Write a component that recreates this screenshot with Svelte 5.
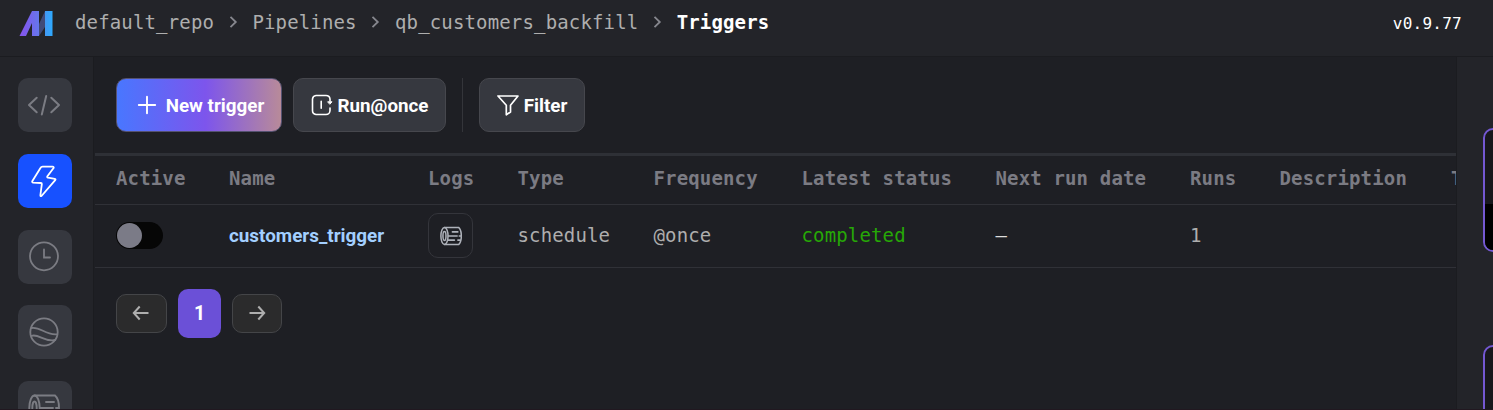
<script>
  const crumbs = ['default_repo', 'Pipelines', 'qb_customers_backfill', 'Triggers'];
  const columns = ['Active', 'Name', 'Logs', 'Type', 'Frequency', 'Latest status', 'Next run date', 'Runs', 'Description', 'T'];
  const nav = ['code', 'bolt', 'clock', 'planet', 'logs'];
</script>

{#snippet logs(size, stroke)}
  <svg width={size} height={size} viewBox="0 0 32 32" fill="none" stroke="currentColor" stroke-width={stroke} stroke-linecap="round">
    <ellipse cx="6.5" cy="16" rx="5.2" ry="12.5" />
    <ellipse cx="6.5" cy="16" rx="2.2" ry="6.5" />
    <path d="M6.5 3.5H27C30 6 31 11 31 16S30 26 27 28.5H6.5M12 16H25M18 10H26M28 16H31M12 22H21M26 22H29" />
  </svg>
{/snippet}

<div class="app">
  <header>
    <svg class="logo" width="34" height="26" viewBox="0 0 34 26">
      <defs>
        <linearGradient id="mark" x1="0" x2="1"><stop offset="0" stop-color="#8755e8" /><stop offset=".35" stop-color="#7b5dec" /><stop offset="1" stop-color="#6577ed" /></linearGradient>
        <linearGradient id="bar" x1="0" x2="1"><stop offset="0" stop-color="#4498f2" /><stop offset="1" stop-color="#2daaff" /></linearGradient>
      </defs>
      <path d="M20 14L26 1V17L20 26Z" fill="#414a78" />
      <path d="M0.5 26L13 1H20V26H13V13L7 26Z" fill="url(#mark)" />
      <path d="M26 1H33.5V26H26Z" fill="url(#bar)" />
    </svg>
    <nav class="crumbs">
      {#each crumbs as crumb, i}
        {#if i > 0}
          <svg width="9" height="14" viewBox="0 0 9 14" fill="none" stroke="#86878e" stroke-width="1.8"><path d="M1.5 1.8L6.8 7L1.5 12.2" /></svg>
        {/if}
        <span class:current={i === crumbs.length - 1}>{crumb}</span>
      {/each}
    </nav>
    <span class="version">v0.9.77</span>
  </header>

  <div class="body">
    <aside class="side">
      {#each nav as item}
        <div class="tile" class:selected={item === 'bolt'}>
          {#if item === 'code'}
            <svg width="34" height="24" viewBox="0 0 34 24" fill="none" stroke="currentColor" stroke-width="2" stroke-linecap="round" stroke-linejoin="round"><path d="M9.7 4.8L2 12L9.7 19.2M24.3 4.8L32 12L24.3 19.2M19.2 3L14.8 21.5" /></svg>
          {:else if item === 'bolt'}
            <svg width="32" height="32" viewBox="0 0 32 32" fill="none" stroke="currentColor" stroke-width="1.8" stroke-linejoin="round"><path d="M14.5 1.7H24.5Q26.3 1.7 25.4 3.3L19.4 11.2Q18.8 12.4 20 12.7L26.8 13.8Q28 14.2 27.2 15.2L13.5 31Q12.3 31.6 12.4 30L13.8 19.4Q14 18.2 12.8 18L5 17.6Q3.7 17.3 4.4 16L12.6 2.8Q13.2 1.7 14.5 1.7Z" /></svg>
          {:else if item === 'clock'}
            <svg width="32" height="32" viewBox="0 0 32 32" fill="none" stroke="currentColor" stroke-width="1.8" stroke-linecap="round"><circle cx="16" cy="15.3" r="14" /><path d="M16 8.5V16.5H22" /></svg>
          {:else if item === 'planet'}
            <svg width="32" height="32" viewBox="0 0 32 32" fill="none" stroke="currentColor" stroke-width="1.8" stroke-linecap="round"><circle cx="16" cy="16" r="13.7" /><path d="M3.5 12C13 10.5 17 19.5 29.2 18.3M3.5 19.8C11 17.5 16 26.3 27.3 24" /></svg>
          {:else}
            {@render logs(32, 1.9)}
          {/if}
        </div>
      {/each}
    </aside>

    <main>
      <div class="toolbar">
        <button class="btn primary">
          <svg width="20" height="20" viewBox="0 0 20 20" stroke="#fff" stroke-width="1.9" stroke-linecap="round"><path d="M10 1.8V18.2M1.8 10H18.2" /></svg>
          <span>New trigger</span>
        </button>
        <button class="btn run">
          <svg width="22" height="22" viewBox="0 0 22 22" fill="none" stroke="#fff" stroke-width="1.6" stroke-linecap="round" stroke-linejoin="round"><path d="M19 7V5A4 4 0 0 0 15 1.5H5A4 4 0 0 0 1.5 5V16.5A4 4 0 0 0 5 20.5H15A4 4 0 0 0 19 16.5V14M10.2 7.3V14.3" /><path d="M17 7.8H21L19 10Z" fill="#fff" stroke-width="1" /></svg>
          <span>Run@once</span>
        </button>
        <i class="divider"></i>
        <button class="btn filter">
          <svg width="22" height="22" viewBox="0 0 22 22" fill="none" stroke="#fff" stroke-width="1.7" stroke-linejoin="round"><path d="M1 2H21L13.5 11.3V18L9.3 20.8V11.3Z" /></svg>
          <span>Filter</span>
        </button>
      </div>

      <div class="table">
        <div class="row head">
          {#each columns as column}<span>{column}</span>{/each}
        </div>
        <div class="row data">
          <span><i class="toggle"></i></span>
          <span class="name">customers_trigger</span>
          <span><button class="log">{@render logs(22, 2.2)}</button></span>
          <span>schedule</span>
          <span>@once</span>
          <span class="ok">completed</span>
          <span class="dash">—</span>
          <span>1</span>
        </div>
      </div>

      <div class="pager">
        <button class="prev"><svg width="18" height="16" viewBox="0 0 18 16" fill="none" stroke="currentColor" stroke-width="2"><path d="M16.5 8H2M7.7 1.5L1.8 8L7.7 14.5" /></svg></button>
        <button class="page">1</button>
        <button><svg width="18" height="16" viewBox="0 0 18 16" fill="none" stroke="currentColor" stroke-width="2"><path d="M1.5 8H16M10.3 1.5L16.2 8L10.3 14.5" /></svg></button>
      </div>
    </main>

    <aside class="right">
      <div class="card"><i></i></div>
      <div class="card second"></div>
    </aside>
  </div>
</div>

<style>
  :global(body) { margin: 0; background: #1e1f24; overflow: hidden; }
  .app { height: 410px; overflow: hidden; box-sizing: border-box; border-bottom: 1px solid #211820; display: flex; flex-direction: column; color: #aeaeae; font: 19px "DejaVu Sans Mono", monospace; letter-spacing: .15px; white-space: nowrap; }
  header { flex: none; box-sizing: border-box; height: 57px; padding: 10px 31px 0 19px; display: flex; align-items: flex-start; background: #232429; border-bottom: 1px solid #1b1c20; }
  .crumbs { display: flex; align-items: center; gap: 14.8px; margin-left: 22px; line-height: 24px; }
  .crumbs svg { margin-right: -.3px; }
  .current { color: #fff; font-weight: 700; }
  .version { margin-left: auto; color: #fff; font-size: 16px; letter-spacing: .25px; line-height: 27px; }
  .body { flex: 1; min-height: 0; display: flex; }
  .side { flex: none; width: 94px; box-sizing: border-box; border-right: 1px solid #1b1c20; background: #232429; padding: 21px 0 0 18px; display: flex; flex-direction: column; gap: 21.75px; }
  .tile { flex: none; width: 54px; height: 54px; border-radius: 10px; background: #36383f; color: #7b7c83; display: grid; place-items: center; box-sizing: border-box; padding-right: 2px; }
  .selected { background: #1751ff; color: #fff; }
  main { flex: 1; min-width: 0; overflow: hidden; padding-left: 1px; background: #1e1f24; }
  button { box-sizing: border-box; padding: 0; border: 0; color: inherit; display: flex; align-items: center; justify-content: center; }
  .toolbar { display: flex; height: 54px; padding: 21px 0 21px 21px; }
  .btn { height: 54px; border-radius: 10px; border: 1px solid #46474d; background: #36383f; color: #fff; font: 700 18.8px Roboto, sans-serif; }
  .btn span { padding-top: 1px; }
  .primary { width: 166px; gap: 9px; padding-left: 3px; background: linear-gradient(90deg, #4877ff 0%, #7d55ec 54%, #b98b98 100%); border-color: #555271; background-origin: border-box; }
  .run { width: 153px; margin-left: 11px; gap: 5px; }
  .divider { width: 1px; background: #34353a; margin: 0 16px; }
  .filter { width: 106px; gap: 5px; }
  .table { border-top: 3px solid #2e3036; }
  .row { display: grid; grid-template-columns: 113px 199px 89.5px 136px 148px 194px 194.5px 89.5px 171.5px 12px; align-items: center; padding-left: 21px; width: max-content; min-width: 100%; box-sizing: border-box; border-bottom: 1px solid #303137; }
  .head { height: 49px; color: #7b7b83; font-weight: 700; padding-bottom: 4px; }
  .data { height: 63px; padding-bottom: 3px; }
  .name { color: #a3cfff; font: 700 18.85px Roboto, sans-serif; letter-spacing: 0; padding-top: 3px; }
  .ok { color: #26a806; }
  .dash { color: #ddd; }
  .toggle { display: block; box-sizing: border-box; width: 47px; height: 27px; margin-top: 2px; padding: 1px; border-radius: 14px; background: #060606; }
  .toggle::before { content: ""; display: block; width: 25px; height: 25px; border-radius: 50%; background: #7b7b87; }
  .log { width: 45px; height: 45px; margin-top: 2px; border: 1px solid #34353b; border-radius: 10px; background: transparent; color: #aeb2ba; }
  .pager { display: flex; align-items: center; gap: 11px; padding: 21px 0 0 21px; }
  .pager button { width: 50px; height: 39px; border: 1px solid #444548; border-radius: 10px; background: #2b2b2c; padding-bottom: 1px; }
  .pager .prev { width: 51px; padding-right: 1px; }
  .pager .page { width: 43px; height: 49px; border: 0; background: #6b50d7; color: #fff; font: 700 19.5px Roboto, sans-serif; }
  .right { flex: none; width: 37px; box-sizing: border-box; border-left: 1px solid #1b1c20; background: #232429; overflow: hidden; padding: 71px 0 0 26px; }
  .card { box-sizing: border-box; width: 200px; height: 124px; border: 2px solid #7458d2; border-radius: 10px; background: #18181c; overflow: hidden; padding-top: 74px; }
  .card i { display: block; height: 48px; background: #000; }
  .second { margin-top: 93px; }
</style>
